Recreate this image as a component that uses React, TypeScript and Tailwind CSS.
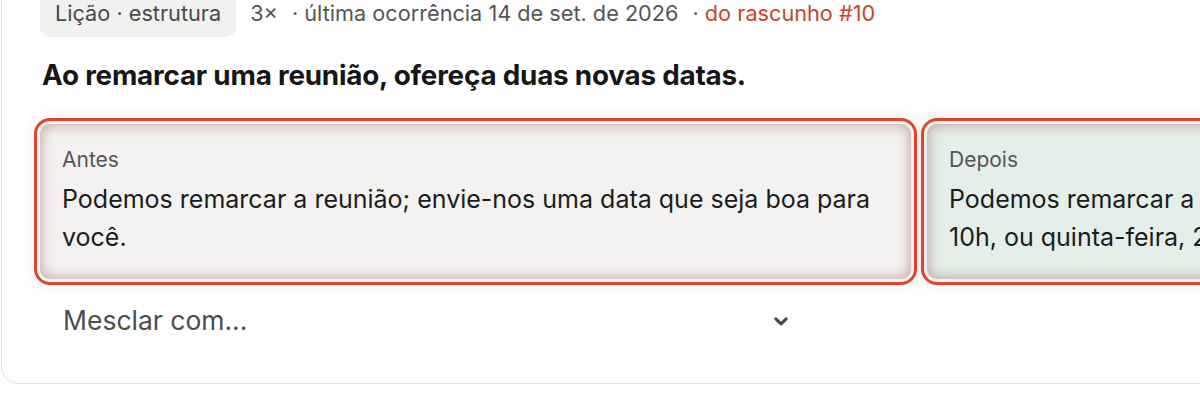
import React from 'react';

const font = { fontFamily: 'Inter, "Noto Sans", sans-serif' };

function ChevronDown() {
  return (
    <svg width="18" height="18" viewBox="0 0 18 18" fill="none" className="text-[#444]">
      <path d="M3.8 6.8 L9 11.8 L14.2 6.8" stroke="currentColor" strokeWidth="3" strokeLinecap="round" strokeLinejoin="round" />
    </svg>
  );
}

interface CompareBoxProps {
  label: string;
  children: React.ReactNode;
  tone: 'before' | 'after';
}

const CompareBox: React.FC<CompareBoxProps> = ({ label, children, tone }) => (
  <div
    className={`rounded-[10px] outline-[3px] outline-solid outline-[#d9482b] outline-offset-[3px] px-[22px] pt-[22px] pb-[23px] shadow-[inset_0_0_14px_rgba(140,60,50,0.48),0_0_16px_7px_rgba(0,0,0,0.08)] ${
      tone === 'before' ? 'bg-[#f3f2f1]' : 'bg-[#e3efe8]'
    }`}
  >
    <div className="text-[21px] leading-[28px] text-[#555]">{label}</div>
    <p className="mt-[6px] text-[25px] leading-[38px] text-[#1c1c1c]">{children}</p>
  </div>
);

export default function App() {
  return (
    <div className="w-[1200px] h-[400px] overflow-hidden bg-white" style={font}>
      <div className="w-[1820px] -mt-[48px] ml-px rounded-[18px] border border-[#e2e2e2] bg-white pl-[38px] pr-[38px] pt-[36px] pb-[38px]">
        {/* meta */}
        <div className="flex items-center gap-[14px] text-[21.7px] text-[#555]">
          <span className="rounded-[10px] bg-[#f1f1f0] px-[15px] py-[10px] leading-[28px] text-[#4a4a4a]">
            Lição · estrutura
          </span>
          <span>3×</span>
          <span>· última ocorrência 14 de set. de 2026</span>
          <span>
            · <span className="text-[#c9452c]">do rascunho #10</span>
          </span>
        </div>

        {/* título */}
        <h2 className="mt-[20px] pl-[2px] text-[27.8px] leading-[36px] font-bold text-[#161616] tracking-[-0.2px]">
          Ao remarcar uma reunião, ofereça duas novas datas.
        </h2>

        {/* antes / depois */}
        <div className="mt-[31px] grid grid-cols-[871px_871px] gap-4">
          <CompareBox tone="before" label="Antes">
            Podemos remarcar a reunião; envie-nos uma data que seja boa para você.
          </CompareBox>
          <CompareBox tone="after" label="Depois">
            Podemos remarcar a reunião para terça-feira, 16 de setembro, às
            <br />
            10h, ou quinta-feira, 25 de setembro, às 14h.
          </CompareBox>
        </div>

        {/* mesclar */}
        <button className="mt-[18px] flex h-[48px] w-[762px] items-center justify-between pl-[23px] pr-[12px] text-[26.5px] text-[#4d4d4d]">
          <span>Mesclar com...</span>
          <ChevronDown />
        </button>
      </div>
    </div>
  );
}
